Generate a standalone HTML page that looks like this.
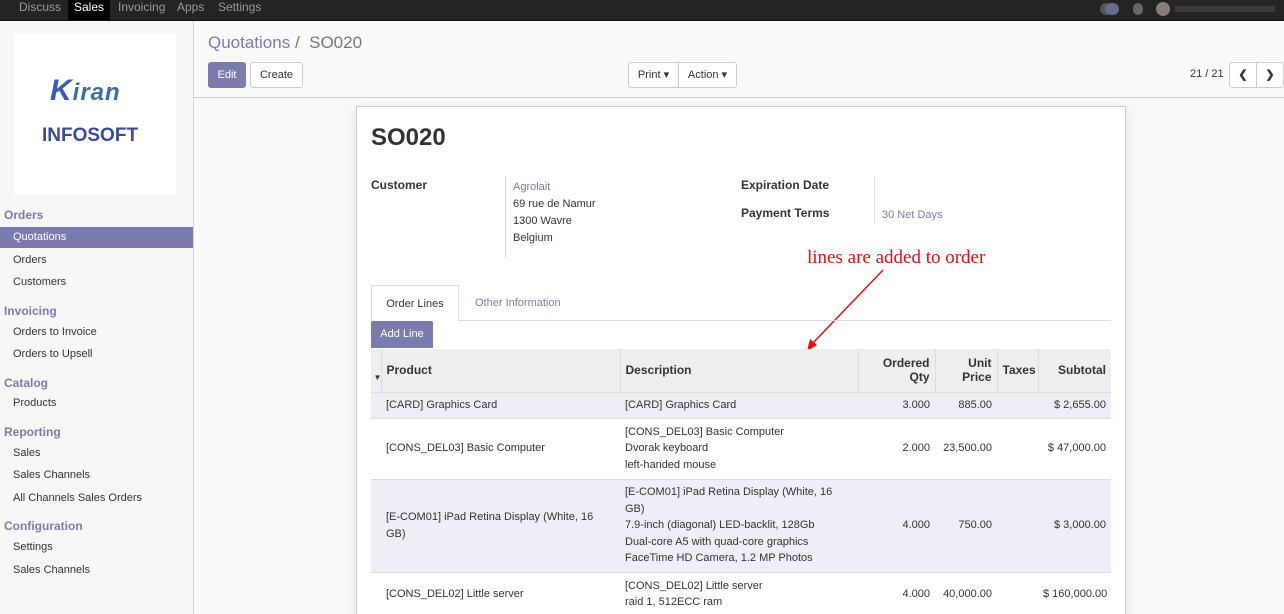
<!DOCTYPE html>
<html><head><meta charset="utf-8"><style>
*{box-sizing:border-box;margin:0;padding:0}
html,body{width:1284px;height:614px;overflow:hidden}
body{font-family:"Liberation Sans",sans-serif;font-size:12px;color:#333;background:#f9f9f9;position:relative}
.nav{position:absolute;left:0;top:0;width:1284px;height:21px;background:#242424;border-bottom:1px solid #111}
.nav span{position:absolute;top:0;height:20px;line-height:15px;font-size:12px;color:#9a9a9a;padding:0 6px}
.side{position:absolute;left:0;top:21px;width:194px;height:593px;background:#f7f7f7;border-right:1px solid #d5d5d5}
.logo{position:absolute;left:14px;top:13px;width:162px;height:161px;background:#fff}
.sh{position:absolute;left:4px;font-size:12px;font-weight:bold;color:#7c7bad}
.si{position:absolute;left:13px;font-size:11px;color:#333}
.act{position:absolute;left:0;width:193px;height:21px;background:#7c7bad}
.cp{position:absolute;left:194px;top:21px;width:1090px;height:77px;background:#f9f9f9;border-bottom:1px solid #ccc}
.btn{position:absolute;height:26px;border:1px solid #ccc;background:#fff;border-radius:3px;font-size:11px;line-height:24px;text-align:center;color:#333}
.sheet{position:absolute;left:356px;top:106px;width:770px;height:520px;background:#fff;border:1px solid #ccc;box-shadow:0 4px 12px rgba(0,0,0,.1)}
.lbl{position:absolute;font-weight:bold;font-size:12px;color:#333}
table{border-collapse:collapse;position:absolute;left:14px;top:242px;width:740px;font-size:11px;table-layout:fixed}
td{padding:0 5px;vertical-align:middle;line-height:16.5px}
th{background:#eee;font-weight:bold;font-size:12px;padding:0 5px;border-left:1px solid #ddd;height:43px;text-align:left}
.r{text-align:right;white-space:nowrap}
tr.s td{background:#eeeef6}
tr td{border-top:1px solid #ddd}
</style></head><body>
<div class="nav">
<span style="left:13px">Discuss</span>
<span style="left:68px;background:#050505;color:#fff">Sales</span>
<span style="left:112px">Invoicing</span>
<span style="left:171px">Apps</span>
<span style="left:212px">Settings</span>
<div style="position:absolute;left:1100px;top:3px;width:12px;height:12px;border-radius:6px;background:#555"></div>
<div style="position:absolute;left:1105px;top:3px;width:14px;height:12px;border-radius:6px;background:#6a6a90"></div>
<div style="position:absolute;left:1133px;top:3px;width:10px;height:12px;border-radius:5px;background:#666"></div>
<div style="position:absolute;left:1156px;top:2px;width:14px;height:14px;border-radius:7px;background:#8a7c78"></div>
<div style="position:absolute;left:1175px;top:6px;width:100px;height:6px;background:#3a3a3a"></div>
</div>
<div class="side">
<div class="logo">
<div style="position:absolute;left:36px;top:40px;font-size:30px;font-weight:bold;color:#3a5db0;font-style:italic;letter-spacing:1px">K<span style="font-size:24px;color:#3b6ea8">iran</span></div>
<div style="position:absolute;left:28px;top:91px;font-size:19px;font-weight:bold;color:#3a4a96;letter-spacing:0">INFOSOFT</div>
</div>
<div class="sh" style="top:187px">Orders</div>
<div class="act" style="top:206px"></div>
<div class="si" style="top:210px;color:#fff">Quotations</div>
<div class="si" style="top:233px">Orders</div>
<div class="si" style="top:255px">Customers</div>
<div class="sh" style="top:283px">Invoicing</div>
<div class="si" style="top:305px">Orders to Invoice</div>
<div class="si" style="top:327px">Orders to Upsell</div>
<div class="sh" style="top:355px">Catalog</div>
<div class="si" style="top:376px">Products</div>
<div class="sh" style="top:404px">Reporting</div>
<div class="si" style="top:426px">Sales</div>
<div class="si" style="top:448px">Sales Channels</div>
<div class="si" style="top:471px">All Channels Sales Orders</div>
<div class="sh" style="top:498px">Configuration</div>
<div class="si" style="top:520px">Settings</div>
<div class="si" style="top:543px">Sales Channels</div>
</div>
<div class="cp">
<div style="position:absolute;left:14px;top:12px;font-size:17px;color:#7c7bad">Quotations <span style="color:#777">/ &nbsp;SO020</span></div>
<div class="btn" style="left:14px;top:41px;width:38px;background:#7c7bad;border-color:#7c7bad;color:#fff">Edit</div>
<div class="btn" style="left:56px;top:41px;width:53px">Create</div>
<div class="btn" style="left:434px;top:41px;width:51px;border-radius:3px 0 0 3px">Print ▾</div>
<div class="btn" style="left:484px;top:41px;width:59px;border-radius:0 3px 3px 0">Action ▾</div>
<div style="position:absolute;left:996px;top:47px;font-size:11px">21 / 21</div>
<div class="btn" style="left:1035px;top:41px;width:28px;border-radius:3px 0 0 3px;font-weight:bold">&#10094;</div>
<div class="btn" style="left:1062px;top:41px;width:28px;border-radius:0 3px 3px 0;font-weight:bold">&#10095;</div>
</div>
<div class="sheet">
<div style="position:absolute;left:14px;top:17px;font-size:24px;font-weight:bold;color:#333">SO020</div>
<div class="lbl" style="left:14px;top:71px">Customer</div>
<div style="position:absolute;left:148px;top:69px;height:82px;border-left:1px solid #ddd"></div>
<div style="position:absolute;left:156px;top:72px;line-height:17px;font-size:11px"><span style="color:#7c7bad">Agrolait</span><br>69 rue de Namur<br>1300 Wavre<br>Belgium</div>
<div class="lbl" style="left:384px;top:71px">Expiration Date</div>
<div class="lbl" style="left:384px;top:99px">Payment Terms</div>
<div style="position:absolute;left:517px;top:69px;height:48px;border-left:1px solid #ddd"></div>
<div style="position:absolute;left:525px;top:102px;font-size:11px;color:#7c7bad">30 Net Days</div>
<div style="position:absolute;left:450px;top:140px;font-family:'Liberation Serif',serif;font-size:19px;color:#e01010">lines are added to order</div>
<svg style="position:absolute;left:440px;top:160px" width="100" height="90"><line x1="86" y1="3" x2="14" y2="78" stroke="#e01010" stroke-width="1.5"/><polygon points="10,84 13,72 20,78" fill="#e01010"/></svg>
<div style="position:absolute;left:14px;top:213px;width:740px;border-bottom:1px solid #ddd;height:1px"></div>
<div style="position:absolute;left:14px;top:178px;width:88px;height:36px;background:#fff;border:1px solid #ddd;border-bottom:none;text-align:center;line-height:36px;font-size:11px">Order Lines</div>
<div style="position:absolute;left:118px;top:190px;font-size:11px;color:#7c7bad">Other Information</div>
<div style="position:absolute;left:14px;top:214px;width:62px;height:27px;background:#7c7bad;color:#fff;font-size:11px;text-align:center;line-height:27px;border-radius:2px 2px 0 0">Add Line</div>
<table>
<colgroup><col style="width:10px"><col style="width:239px"><col style="width:238px"><col style="width:77px"><col style="width:62px"><col style="width:41px"><col></colgroup>
<tr><th style="border-left:none;padding:0"></th><th style="position:relative">Product<span style="position:absolute;left:-8px;top:24px;font-size:8px">▼</span></th><th>Description</th><th class="r">Ordered<br>Qty</th><th class="r">Unit<br>Price</th><th>Taxes</th><th class="r">Subtotal</th></tr>
<tr class="s" style="height:26px"><td></td><td>[CARD] Graphics Card</td><td>[CARD] Graphics Card</td><td class="r">3.000</td><td class="r">885.00</td><td></td><td class="r">$ 2,655.00</td></tr>
<tr style="height:61px"><td></td><td>[CONS_DEL03] Basic Computer</td><td>[CONS_DEL03] Basic Computer<br>Dvorak keyboard<br>left-handed mouse</td><td class="r">2.000</td><td class="r">23,500.00</td><td></td><td class="r">$ 47,000.00</td></tr>
<tr class="s" style="height:93px"><td></td><td>[E-COM01] iPad Retina Display (White, 16 GB)</td><td>[E-COM01] iPad Retina Display (White, 16 GB)<br>7.9-inch (diagonal) LED-backlit, 128Gb<br>Dual-core A5 with quad-core graphics<br>FaceTime HD Camera, 1.2 MP Photos</td><td class="r">4.000</td><td class="r">750.00</td><td></td><td class="r">$ 3,000.00</td></tr>
<tr style="height:44px"><td></td><td>[CONS_DEL02] Little server</td><td>[CONS_DEL02] Little server<br>raid 1, 512ECC ram</td><td class="r">4.000</td><td class="r">40,000.00</td><td></td><td class="r">$ 160,000.00</td></tr>
</table>
</div>
</body></html>
